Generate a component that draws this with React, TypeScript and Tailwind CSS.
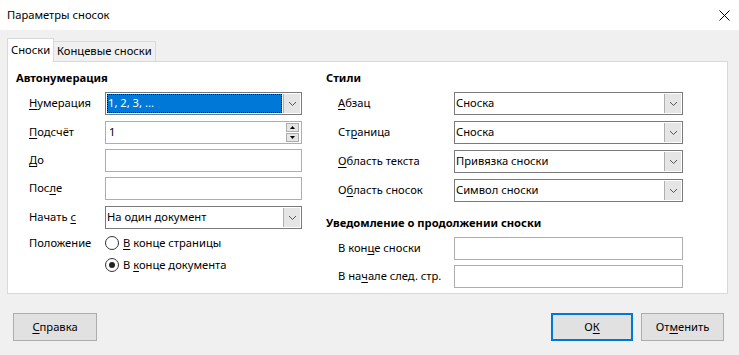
import React from "react";

const U = ({ children }: { children: React.ReactNode }) => (
  <span className="underline underline-offset-2 decoration-1">{children}</span>
);

const Chevron = () => (
  <svg width="9" height="6" viewBox="0 0 9 6">
    <path d="M1 1 L4.5 4.5 L8 1" fill="none" stroke="#555" strokeWidth="1" />
  </svg>
);

const Combo = ({ value, selected = false, w }: { value: string; selected?: boolean; w: string }) => (
  <div className={`flex h-[23px] ${w} border border-[#7a7a7a] bg-white`}>
    {selected ? (
      <div className="flex-1 m-[1px] bg-[#0078d7] outline-1 outline-dotted outline-black -outline-offset-1 flex items-center pl-[1px] text-white">
        {value}
      </div>
    ) : (
      <div className="flex-1 flex items-center pl-[1px]">{value}</div>
    )}
    <div className="w-[17px] m-[1px] ml-0 bg-[#e5e5e5] border-l border-[#b0b0b0] flex items-center justify-center">
      <Chevron />
    </div>
  </div>
);

const Input = ({ w, value = "" }: { w: string; value?: string }) => (
  <div className={`h-[23px] ${w} border border-[#adadad] bg-white flex items-center pl-[3px]`}>{value}</div>
);

const Radio = ({ checked }: { checked?: boolean }) => (
  <div className="w-[14px] h-[14px] rounded-full border border-[#333] bg-white flex items-center justify-center">
    {checked && <div className="w-[6px] h-[6px] rounded-full bg-[#222]" />}
  </div>
);

export default function App() {
  return (
    <div
      className="w-[739px] h-[355px] bg-[#f0f0f0] text-[11.2px] text-black flex flex-col overflow-hidden whitespace-nowrap"
      style={{ fontFamily: '"Segoe UI", "Noto Sans", sans-serif' }}
    >
      {/* Title bar */}
      <div className="h-[30px] bg-white flex items-center justify-between pl-[7px] pr-[9px]">
        <span>Параметры сносок</span>
        <svg width="11" height="11" viewBox="0 0 11 11">
          <path d="M0.5 0.5 L10.5 10.5 M10.5 0.5 L0.5 10.5" stroke="#000" strokeWidth="1" />
        </svg>
      </div>

      {/* Tabs */}
      <div className="flex items-end h-[31px] pl-[7px] pt-[8px]">
        <div className="h-[24px] px-[3px] bg-white border border-b-0 border-[#d9d9d9] flex items-center relative top-[1px] z-10">
          Сноски
        </div>
        <div className="h-[20px] px-[3px] bg-[#f0f0f0] border border-l-0 border-b-0 border-[#d9d9d9] flex items-center">
          Концевые сноски
        </div>
      </div>

      {/* Panel */}
      <div className="ml-[7px] mr-[11px] h-[233px] bg-white border border-[#d9d9d9] flex">
        {/* Left column */}
        <div className="w-[310px] pl-[8px] pt-[8px] flex flex-col">
          <div className="h-[17px] font-bold flex items-center">Автонумерация</div>
          <div className="flex items-center h-[23px] mt-[5px]">
            <div className="w-[89px] pl-[13px]"><U>Н</U>умерация</div>
            <Combo value="1, 2, 3, ..." selected w="w-[197px]" />
          </div>
          <div className="flex items-center h-[23px] mt-[6px]">
            <div className="w-[89px] pl-[13px]"><U>П</U>одсчёт</div>
            <div className="h-[23px] w-[197px] border border-[#adadad] bg-white flex items-center pl-[3px] relative">
              1
              <div className="absolute right-[2px] top-[1px] flex flex-col gap-[1px]">
                <div className="w-[13px] h-[9px] bg-[#e5e5e5] border border-[#adadad] flex items-center justify-center">
                  <svg width="5" height="3" viewBox="0 0 5 3"><path d="M0 3 L2.5 0 L5 3 Z" fill="#000" /></svg>
                </div>
                <div className="w-[13px] h-[9px] bg-[#e5e5e5] border border-[#adadad] flex items-center justify-center">
                  <svg width="5" height="3" viewBox="0 0 5 3"><path d="M0 0 L5 0 L2.5 3 Z" fill="#000" /></svg>
                </div>
              </div>
            </div>
          </div>
          <div className="flex items-center h-[23px] mt-[5px]">
            <div className="w-[89px] pl-[13px]"><U>Д</U>о</div>
            <Input w="w-[197px]" />
          </div>
          <div className="flex items-center h-[23px] mt-[5px]">
            <div className="w-[89px] pl-[13px]">Пос<U>л</U>е</div>
            <Input w="w-[197px]" />
          </div>
          <div className="flex items-center h-[23px] mt-[6px]">
            <div className="w-[89px] pl-[13px]">Начать <U>с</U></div>
            <Combo value="На один документ" w="w-[197px]" />
          </div>
          <div className="flex items-center h-[22px] mt-[3px]">
            <div className="w-[89px] pl-[13px]">Положение</div>
            <Radio />
            <span className="ml-[4px]"><U>В</U> конце страницы</span>
          </div>
          <div className="flex items-center h-[22px]">
            <div className="w-[89px]" />
            <Radio checked />
            <span className="ml-[4px]">В <U>к</U>онце документа</span>
          </div>
        </div>

        {/* Right column */}
        <div className="flex-1 pl-[8px] pt-[8px] flex flex-col">
          <div className="h-[17px] font-bold flex items-center">Стили</div>
          <div className="flex items-center h-[23px] mt-[5px]">
            <div className="w-[128px] pl-[12px]"><U>А</U>бзац</div>
            <Combo value="Сноска" w="w-[229px]" />
          </div>
          <div className="flex items-center h-[23px] mt-[6px]">
            <div className="w-[128px] pl-[12px]">Ст<U>р</U>аница</div>
            <Combo value="Сноска" w="w-[229px]" />
          </div>
          <div className="flex items-center h-[23px] mt-[6px]">
            <div className="w-[128px] pl-[12px]"><U>О</U>бласть текста</div>
            <Combo value="Привязка сноски" w="w-[229px]" />
          </div>
          <div className="flex items-center h-[23px] mt-[6px]">
            <div className="w-[128px] pl-[12px]">О<U>б</U>ласть сносок</div>
            <Combo value="Символ сноски" w="w-[229px]" />
          </div>
          <div className="h-[17px] font-bold flex items-center mt-[13px]">Уведомление о продолжении сноски</div>
          <div className="flex items-center h-[22px] mt-[5px]">
            <div className="w-[128px] pl-[12px]">В кон<U>ц</U>е сноски</div>
            <Input w="w-[229px]" />
          </div>
          <div className="flex items-center h-[22px] mt-[6px]">
            <div className="w-[128px] pl-[12px]">В на<U>ч</U>але след. стр.</div>
            <Input w="w-[229px]" />
          </div>
        </div>
      </div>

      {/* Buttons */}
      <div className="flex items-center mt-[19px] pl-[13px] pr-[15px]">
        <div className="w-[84px] h-[28px] bg-[#e1e1e1] border border-[#adadad] flex items-center justify-center">
          <U>С</U>правка
        </div>
        <div className="flex-1" />
        <div className="w-[82px] h-[28px] bg-[#e1e1e1] border-2 border-[#0078d7] flex items-center justify-center">
          О<U>К</U>
        </div>
        <div className="w-[83px] h-[28px] ml-[8px] bg-[#e1e1e1] border border-[#adadad] flex items-center justify-center">
          От<U>м</U>енить
        </div>
      </div>
    </div>
  );
}
